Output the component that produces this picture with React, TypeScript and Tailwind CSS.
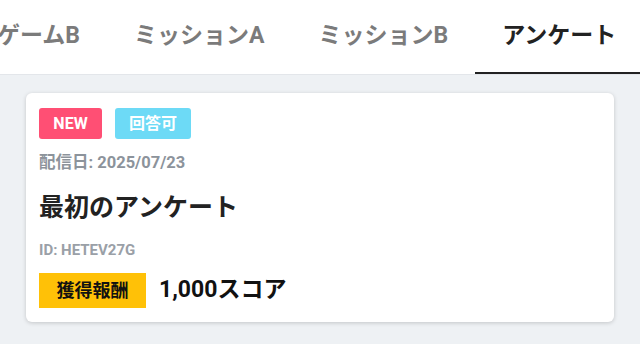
import React from "react";

const tabs = ["ゲームB", "ミッションA", "ミッションB", "アンケート"];

export default function App() {
  return (
    <div
      className="w-[640px] h-[344px] overflow-hidden bg-[#eef1f4]"
      style={{ fontFamily: "Roboto, 'Noto Sans CJK JP', sans-serif" }}
    >
      <div className="h-[75px] bg-white border-b border-[#e3e6ea] flex items-stretch overflow-hidden">
        <div className="flex items-stretch -ml-[30px] shrink-0">
          {tabs.map((t, i) => {
            const active = i === tabs.length - 1;
            return (
              <div
                key={t}
                className={
                  "relative flex items-center px-[27px] pb-[1px] shrink-0 whitespace-nowrap text-[23px] font-bold " +
                  (active ? "text-[#222222]" : "text-[#7b7b7b]")
                }
              >
                {t}
                {active && (
                  <div className="absolute left-0 right-0 -bottom-px h-[3px] bg-[#222222]" />
                )}
              </div>
            );
          })}
        </div>
      </div>
      <div className="mx-[26px] mt-[18px] bg-white rounded-[6px] shadow-[0_1px_4px_rgba(0,0,0,0.18)] px-[13px] pt-[15px] pb-[14px]">
        <div className="flex gap-[13px]">
          <div className="h-[31px] w-[63px] rounded-[3px] bg-[#ff4f74] text-white text-[16px] font-bold flex items-center justify-center">
            NEW
          </div>
          <div className="h-[31px] w-[76px] rounded-[3px] bg-[#6ddaf6] text-white text-[16px] font-bold flex items-center justify-center">
            回答可
          </div>
        </div>
        <div className="mt-[14px] text-[16.5px] leading-[20px] font-bold text-[#8c939b]">
          配信日: 2025/07/23
        </div>
        <div className="mt-[19px] text-[25px] leading-[32px] font-bold text-[#222222]">
          最初のアンケート
        </div>
        <div className="mt-[17px] text-[15px] leading-[18px] font-bold text-[#9aa0a7]">
          ID: HETEV27G
        </div>
        <div className="mt-[14px] flex items-center">
          <div className="h-[35px] w-[107px] bg-[#ffc107] text-[18px] font-bold text-[#111111] flex items-center justify-center">
            獲得報酬
          </div>
          <div className="ml-[13px] text-[23px] font-bold text-[#111111]">1,000スコア</div>
        </div>
      </div>
    </div>
  );
}
